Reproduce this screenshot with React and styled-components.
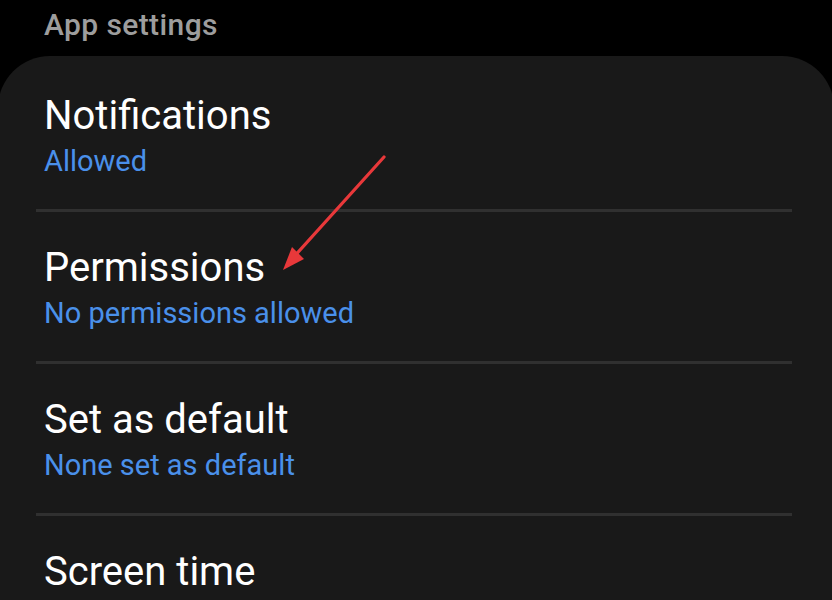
import React from "react";
import styled, { createGlobalStyle } from "styled-components";

const GlobalStyle = createGlobalStyle`
  html, body {
    margin: 0;
    padding: 0;
    background: #000;
  }
  body {
    font-family: Roboto, "Noto Sans", "Liberation Sans", sans-serif;
    -webkit-font-smoothing: antialiased;
  }
`;

const Screen = styled.div`
  position: relative;
  width: 832px;
  height: 600px;
  overflow: hidden;
  background: #000;
`;

const Header = styled.div`
  height: 56px;
  padding-left: 44px;
  box-sizing: border-box;
  color: #9d9d9d;
  font-size: 30px;
  line-height: 50px;
  font-weight: 500;
  letter-spacing: 0.4px;
`;

const Card = styled.div`
  margin: 0 -2px;
  padding-top: 4px;
  background: #191919;
  border-radius: 52px 52px 0 0;
  height: 600px;
`;

const Item = styled.div`
  padding: 32px 45px 30px 46px;
`;

const Title = styled.div`
  color: #fff;
  font-size: 40px;
  line-height: 48px;
  white-space: nowrap;
`;

const Sub = styled.div`
  margin-top: 3px;
  color: #4a90ea;
  font-size: 29px;
  line-height: 36px;
  white-space: nowrap;
`;

const Divider = styled.div`
  height: 3px;
  margin: 0 42px 0 38px;
  background: #303030;
`;

const Arrow = styled.svg`
  position: absolute;
  left: 0;
  top: 0;
  pointer-events: none;
`;

const items = [
  { title: "Notifications", sub: "Allowed" },
  { title: "Permissions", sub: "No permissions allowed" },
  { title: "Set as default", sub: "None set as default" },
  { title: "Screen time", sub: "" },
];

export default function App() {
  return (
    <Screen>
      <GlobalStyle />
      <Header>App settings</Header>
      <Card>
        {items.map((it, i) => (
          <React.Fragment key={it.title}>
            <Item>
              <Title>{it.title}</Title>
              {it.sub && <Sub>{it.sub}</Sub>}
            </Item>
            {i < items.length - 1 && <Divider />}
          </React.Fragment>
        ))}
      </Card>
      <Arrow width="832" height="600" viewBox="0 0 832 600">
        <line x1="384" y1="157" x2="291" y2="260" stroke="#e8383a" strokeWidth="3.2" strokeLinecap="round" />
        <polygon points="283,270 292,247 304,259" fill="#e8383a" />
      </Arrow>
    </Screen>
  );
}
